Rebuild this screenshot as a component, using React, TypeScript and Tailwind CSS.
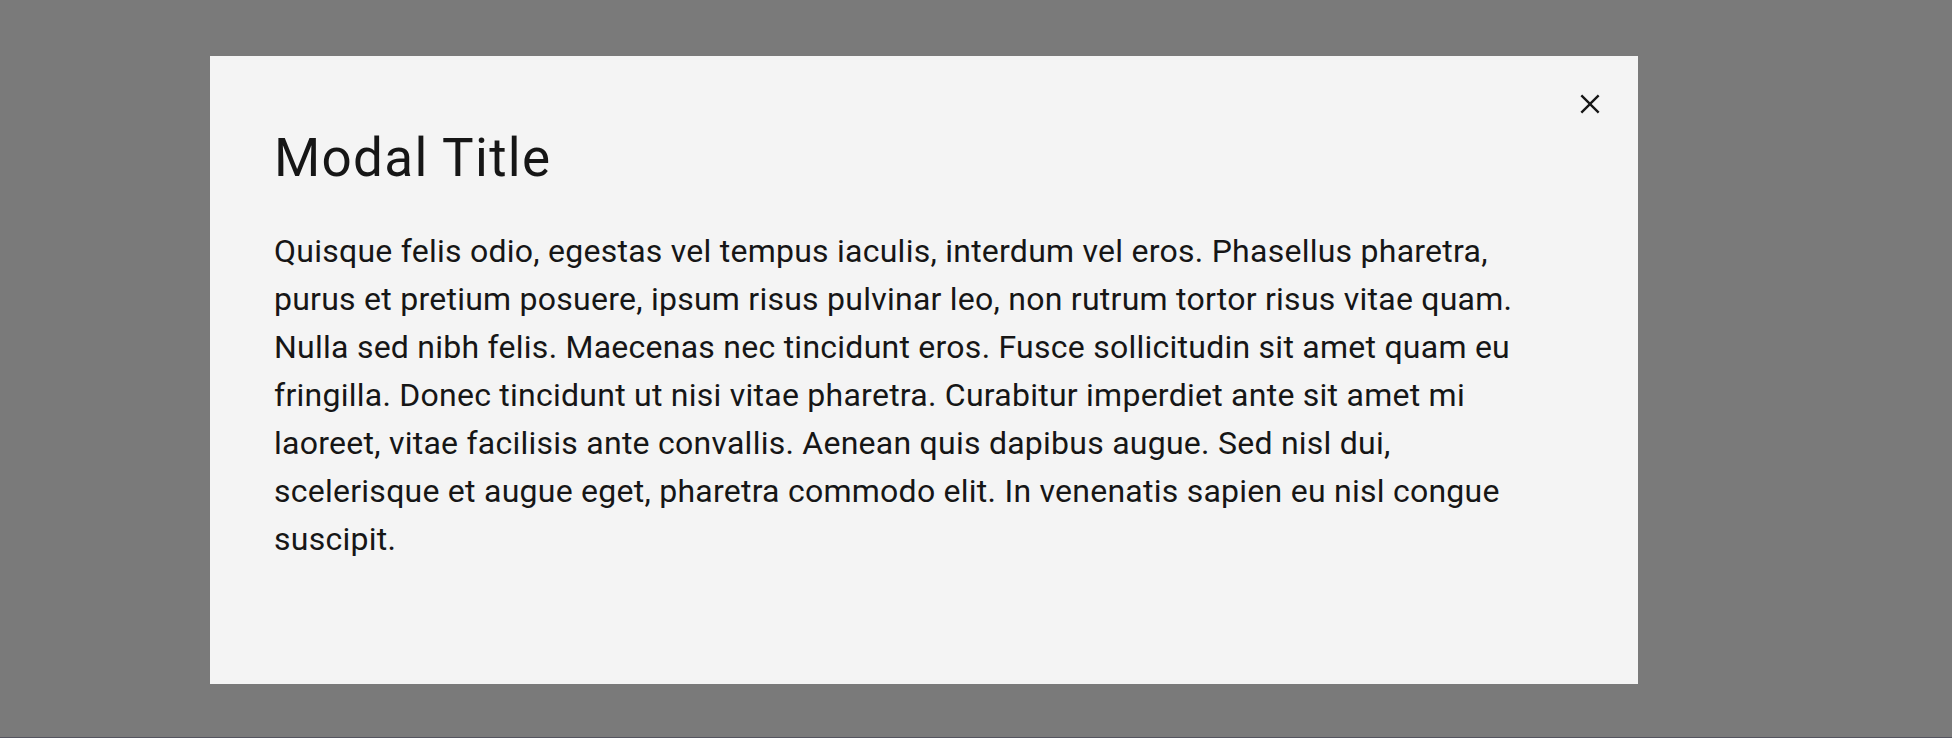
import React from 'react';

const lines = [
    'Quisque felis odio, egestas vel tempus iaculis, interdum vel eros. Phasellus pharetra,',
    'purus et pretium posuere, ipsum risus pulvinar leo, non rutrum tortor risus vitae quam.',
    'Nulla sed nibh felis. Maecenas nec tincidunt eros. Fusce sollicitudin sit amet quam eu',
    'fringilla. Donec tincidunt ut nisi vitae pharetra. Curabitur imperdiet ante sit amet mi',
    'laoreet, vitae facilisis ante convallis. Aenean quis dapibus augue. Sed nisl dui,',
    'scelerisque et augue eget, pharetra commodo elit. In venenatis sapien eu nisl congue',
    'suscipit.'
];

function CloseIcon() {
    return (
        <svg width="38" height="38" viewBox="0 0 32 32" fill="#161616" aria-hidden="true">
            <path d="M24 9.4L22.6 8 16 14.6 9.4 8 8 9.4 14.6 16 8 22.6 9.4 24 16 17.4 22.6 24 24 22.6 17.4 16 24 9.4z" />
        </svg>
    );
}

export default function App() {
    return (
        <div className="w-full h-[738px] bg-[#7a7a7a] border-b border-[#55555f] pl-[210px] pt-[56px] font-['Roboto',sans-serif]">
            {/* Modal container */}
            <div className="w-[1428px] h-[628px] bg-[#f4f4f4] text-[#161616] flex">
                <div className="flex-1 pl-[64px] pt-[76px]">
                    <h2 className="text-[53px] leading-none font-normal tracking-[1.3px]">Modal Title</h2>
                    <p className="mt-[42px] text-[32px] leading-[48px] tracking-[0.25px]">
                        {lines.map((l, i) => (
                            <React.Fragment key={i}>
                                {l}
                                {i < lines.length - 1 && <br />}
                            </React.Fragment>
                        ))}
                    </p>
                </div>
                <div className="pt-[29px] pr-[29px]">
                    <button className="w-[38px] h-[38px] flex items-center justify-center">
                        <CloseIcon />
                    </button>
                </div>
            </div>
        </div>
    );
}
